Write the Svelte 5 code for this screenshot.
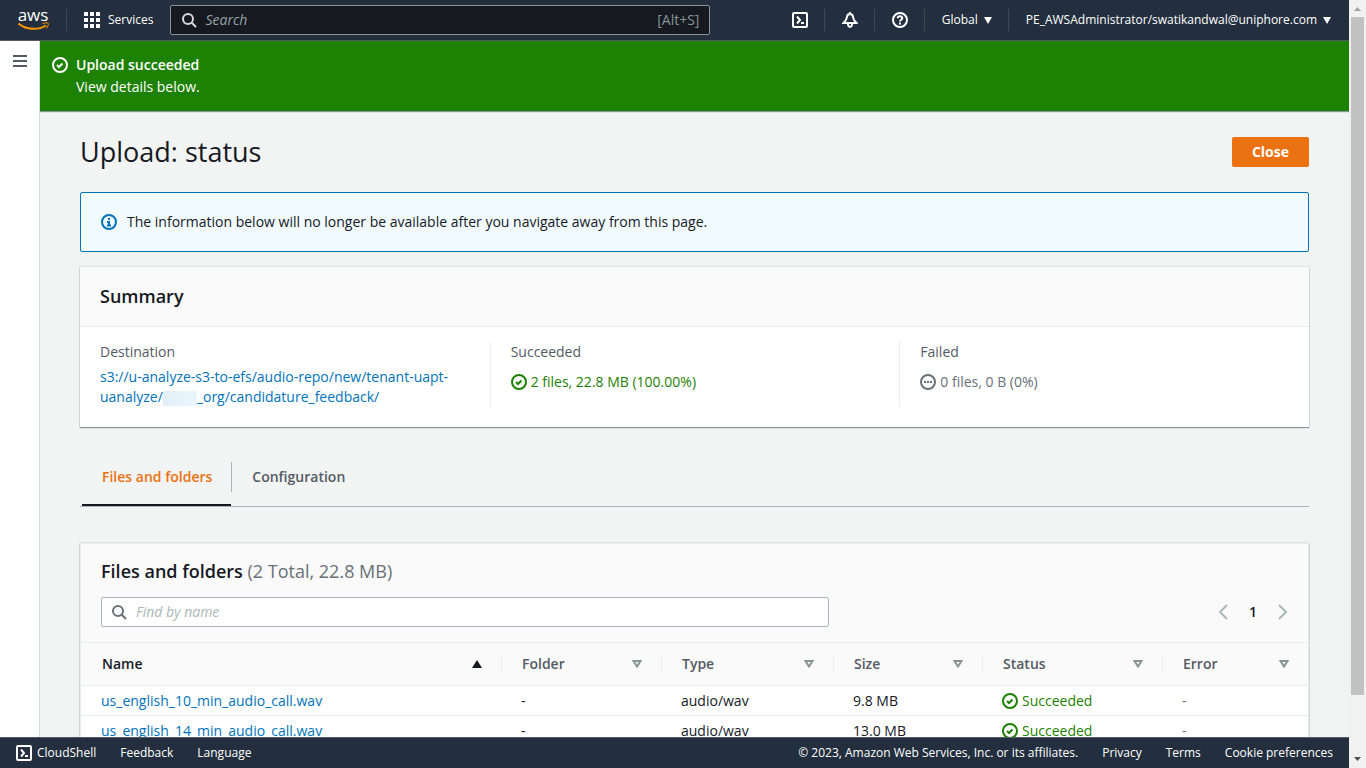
<script>
    let search = "";
    let filter = "";
    let activeTab = "files";

    const tabs = [
        { id: "files", label: "Files and folders" },
        { id: "config", label: "Configuration" },
    ];

    const columns = [
        { id: "name", label: "Name" },
        { id: "folder", label: "Folder" },
        { id: "type", label: "Type" },
        { id: "size", label: "Size" },
        { id: "status", label: "Status" },
        { id: "error", label: "Error" },
    ];

    const files = [
        { name: "us_english_10_min_audio_call.wav", folder: "-", type: "audio/wav", size: "9.8 MB", error: "-" },
        { name: "us_english_14_min_audio_call.wav", folder: "-", type: "audio/wav", size: "13.0 MB", error: "-" },
    ];

    let sortedBy = "name";
    $: rows = files.filter((f) => f.name.includes(filter));
</script>

{#snippet check()}
    <svg class="icon" viewBox="0 0 16 16" aria-hidden="true">
        <circle cx="8" cy="8" r="7" />
        <path d="M5 8l2 2 3.5-3.5" />
    </svg>
{/snippet}

{#snippet shell()}
    <svg class="icon" viewBox="0 0 16 16" aria-hidden="true">
        <rect x="1" y="1" width="14" height="14" rx="1" />
        <path d="M5 4.500L8 8l-3 3.500M9 11h3" />
    </svg>
{/snippet}

{#snippet caret()}
    <svg class="caret" viewBox="0 0 8 7" aria-hidden="true"><path d="M0 0h8L4 7z" /></svg>
{/snippet}

<div class="window">
    <div class="page">
        <header class="topbar">
            <a class="logo" href="#home" aria-label="AWS home">
                <svg viewBox="0 0 32 24" aria-hidden="true">
                    <text x="15" y="13" text-anchor="middle">aws</text>
                    <path class="smile" d="M.5 15.500C8 22 20 22.500 28 17.500" />
                    <path class="tip" d="M24.500 15.800c2-1.200 5.200-1.200 5.700-.5s-.3 3.700-2 5.200" />
                </svg>
            </a>
            <span class="rule"></span>
            <button class="services">
                <svg viewBox="0 0 16 16" aria-hidden="true">
                    <path d="M0 0h4v4H0zM6 0h4v4H6zM12 0h4v4h-4zM0 6h4v4H0zM6 6h4v4H6zM12 6h4v4h-4zM0 12h4v4H0zM6 12h4v4H6zM12 12h4v4h-4z" />
                </svg>
                Services
            </button>
            <label class="search">
                <svg class="icon" viewBox="0 0 16 16" aria-hidden="true">
                    <circle cx="7" cy="7" r="5" /><path d="M10.500 10.500L15 15" />
                </svg>
                <input type="search" placeholder="Search" aria-label="Search" bind:value={search}>
                <span>[Alt+S]</span>
            </label>
            <nav class="tools" aria-label="Account">
                <button aria-label="CloudShell">{@render shell()}</button>
                <button aria-label="Notifications">
                    <svg class="icon" viewBox="0 0 16 16" aria-hidden="true">
                        <path d="M8 2C5.800 2 5 3.500 4.800 5.500 4.500 8.300 3.500 8.800 1.500 11h13C12.500 8.800 11.500 8.300 11.200 5.500 11 3.500 10.200 2 8 2z" />
                        <path d="M6 11.500c-.5 4.500 4.500 4.500 4 0M8 0v2" />
                    </svg>
                </button>
                <button aria-label="Help">
                    <svg class="icon" viewBox="0 0 16 16" aria-hidden="true">
                        <circle cx="8" cy="8" r="7" />
                        <path d="M5.700 6.300C5.700 3.500 10.300 3.500 10.300 6.200 10.300 7.800 8 7.700 8 9.500M8 10.500v2" />
                    </svg>
                </button>
                <button class="menu">Global {@render caret()}</button>
                <button class="menu account">PE_AWSAdministrator/swatikandwal@uniphore.com {@render caret()}</button>
            </nav>
        </header>

        <div class="middle">
            <aside>
                <button aria-label="Open navigation">
                    <svg viewBox="0 0 14 12" aria-hidden="true"><path d="M0 1h14M0 6h14M0 11h14" /></svg>
                </button>
            </aside>

            <main>
                <div class="flash" role="status">
                    {@render check()}
                    <div>
                        <strong>Upload succeeded</strong>
                        <p>View details below.</p>
                    </div>
                </div>

                <div class="content">
                    <div class="title">
                        <h1>Upload: status</h1>
                        <button class="close">Close</button>
                    </div>

                    <div class="info">
                        <svg class="icon" viewBox="0 0 16 16" aria-hidden="true">
                            <circle cx="8" cy="8" r="7" />
                            <path d="M6 8h2v3M6 11.500h4M7 5h2" />
                        </svg>
                        <p>The information below will no longer be available after you navigate away from this page.</p>
                    </div>

                    <section class="card summary">
                        <h2>Summary</h2>
                        <dl>
                            <div>
                                <dt>Destination</dt>
                                <dd>
                                    <a href="#destination">s3://u-analyze-s3-to-efs/audio-repo/new/tenant-uapt-<br>uanalyze/<span class="redacted"></span>_org/candidature_feedback/</a>
                                </dd>
                            </div>
                            <div>
                                <dt>Succeeded</dt>
                                <dd class="result ok">{@render check()} 2 files, 22.8 MB (100.00%)</dd>
                            </div>
                            <div>
                                <dt>Failed</dt>
                                <dd class="result">
                                    <svg class="icon" viewBox="0 0 16 16" aria-hidden="true">
                                        <circle cx="8" cy="8" r="7" />
                                        <path d="M4 8h2M7 8h2M10 8h2" />
                                    </svg>
                                    0 files, 0 B (0%)
                                </dd>
                            </div>
                        </dl>
                    </section>

                    <div class="tabs" role="tablist">
                        {#each tabs as tab}
                            <button role="tab" aria-selected={activeTab === tab.id} class:active={activeTab === tab.id} on:click={() => (activeTab = tab.id)}>
                                <span>{tab.label}</span>
                            </button>
                        {/each}
                    </div>

                    <section class="card files">
                        <div class="files-head">
                            <h2>Files and folders <span>(2 Total, 22.8 MB)</span></h2>
                            <div class="filter-row">
                                <label class="filter">
                                    <svg class="icon" viewBox="0 0 16 16" aria-hidden="true">
                                        <circle cx="7" cy="7" r="5" /><path d="M10.500 10.500L15 15" />
                                    </svg>
                                    <input type="search" placeholder="Find by name" aria-label="Find by name" bind:value={filter}>
                                </label>
                                <div class="pages">
                                    <button aria-label="Previous page"><svg class="icon" viewBox="0 0 16 16" aria-hidden="true"><path d="M12 1L5 8l7 7" /></svg></button>
                                    <button class="current">1</button>
                                    <button aria-label="Next page"><svg class="icon" viewBox="0 0 16 16" aria-hidden="true"><path d="M4 1l7 7-7 7" /></svg></button>
                                </div>
                            </div>
                        </div>
                        <table>
                            <thead>
                                <tr>
                                    {#each columns as column}
                                        <th class={column.id}>
                                            <button class:sorted={sortedBy === column.id} on:click={() => (sortedBy = column.id)}>
                                                {column.label}
                                                <svg viewBox="0 0 10 8" aria-hidden="true">
                                                    {#if sortedBy === column.id}
                                                        <path class="solid" d="M5 0l5 8H0z" />
                                                    {:else}
                                                        <path d="M1.500 1h7L5 6.500z" />
                                                    {/if}
                                                </svg>
                                            </button>
                                        </th>
                                    {/each}
                                </tr>
                            </thead>
                            <tbody>
                                {#each rows as file}
                                    <tr>
                                        <td><a href="#file">{file.name}</a></td>
                                        <td>{file.folder}</td>
                                        <td>{file.type}</td>
                                        <td>{file.size}</td>
                                        <td><span class="result ok">{@render check()} Succeeded</span></td>
                                        <td class="muted">{file.error}</td>
                                    </tr>
                                {/each}
                            </tbody>
                        </table>
                    </section>
                </div>
            </main>
        </div>

        <footer>
            <button>{@render shell()} CloudShell</button>
            <a href="#feedback">Feedback</a>
            <a href="#language">Language</a>
            <span class="legal">© 2023, Amazon Web Services, Inc. or its affiliates.</span>
            <a href="#privacy">Privacy</a>
            <a href="#terms">Terms</a>
            <a href="#cookies">Cookie preferences</a>
        </footer>
    </div>

    <div class="scrollbar" aria-hidden="true">
        <svg viewBox="0 0 17 17"><path fill="#a3a3a3" d="M5 11h7L8.500 7z" /></svg>
        <div class="thumb"></div>
        <div class="track"></div>
        <svg viewBox="0 0 17 17"><path fill="#505050" d="M5 6h7l-3.500 4z" /></svg>
    </div>
</div>

<style>
    :global(body) {
        margin: 0;
        background: #f2f3f3;
    }
    .window {
        display: flex;
        height: 100vh;
        overflow: hidden;
        font-family: "Open Sans", "Noto Sans", sans-serif;
        font-size: 14px;
        line-height: 20px;
        color: #16191f;
    }
    .window :global(*) {
        box-sizing: border-box;
    }
    .page {
        flex: 1;
        min-width: 0;
        display: flex;
        flex-direction: column;
    }
    button, input {
        font: inherit;
        color: inherit;
        background: none;
        border: 0;
        padding: 0;
        margin: 0;
    }
    button {
        cursor: pointer;
    }
    input {
        outline: 0;
    }
    h1, h2, p, dl, dd {
        margin: 0;
    }
    a {
        color: #0073bb;
        text-decoration: none;
    }
    .icon {
        width: 16px;
        height: 16px;
        flex: none;
        fill: none;
        stroke: currentColor;
        stroke-width: 2;
    }

    /* top bar */
    .topbar {
        display: flex;
        align-items: center;
        height: 41px;
        flex: none;
        background: #232f3e;
        border-bottom: 1px solid #545b64;
        color: #fff;
        font-size: 12px;
        font-weight: 500;
    }
    .logo {
        margin-left: 18px;
        height: 24px;
    }
    .logo svg {
        width: 32px;
        height: 24px;
        overflow: visible;
    }
    .logo text {
        fill: #fff;
        font-size: 17px;
        font-weight: 500;
    }
    .logo path {
        fill: none;
        stroke: #f90;
        stroke-width: 2;
    }
    .logo .tip {
        stroke-width: 1;
    }
    .rule {
        height: 22px;
        border-left: 1px solid #414750;
        margin: 0 17px 0 16px;
    }
    .services {
        display: flex;
        align-items: center;
        gap: 8px;
    }
    .services svg {
        width: 16px;
        height: 16px;
        fill: #fff;
    }
    .search {
        display: flex;
        align-items: center;
        width: 540px;
        height: 30px;
        margin-left: 17px;
        padding: 0 10px;
        gap: 8px;
        background: #16191f;
        border: 1px solid #879596;
        border-radius: 2px;
        font-size: 14px;
        font-weight: 400;
    }
    .search .icon {
        color: #d5dbdb;
    }
    .search input {
        flex: 1;
        min-width: 0;
    }
    .search input::placeholder {
        color: #95a5a6;
        font-style: italic;
    }
    .search span {
        color: #879596;
    }
    .tools {
        display: flex;
        align-items: center;
        margin-left: auto;
    }
    .tools button {
        display: flex;
        align-items: center;
        height: 22px;
        padding: 0 16px 0 17px;
        border-left: 1px solid #414750;
        white-space: nowrap;
    }
    .tools button:first-child {
        border-left: 0;
    }
    .menu {
        gap: 6px;
    }
    .account {
        margin-right: 2px;
    }
    .caret {
        width: 8px;
        height: 7px;
        fill: #fff;
    }

    .middle {
        flex: 1;
        min-height: 0;
        display: flex;
    }
    aside {
        width: 40px;
        flex: none;
        background: #fff;
        border-right: 1px solid #d5dbdb;
        padding: 14px 0 0 13px;
    }
    aside button {
        display: block;
    }
    aside svg {
        display: block;
        width: 14px;
        height: 12px;
        stroke: #545b64;
        stroke-width: 2;
    }
    main {
        flex: 1;
        min-width: 0;
        overflow: hidden;
        background: #f2f3f3;
    }
    .flash {
        display: flex;
        gap: 8px;
        padding: 14px 12px;
        background: #1d8102;
        color: #fff;
        box-shadow: 0 1px 1px #879596;
    }
    .flash .icon {
        margin-top: 2px;
    }
    .flash strong, .flash p {
        display: block;
        line-height: 20px;
    }
    .flash strong {
        font-weight: 600;
    }
    .flash p {
        margin-top: 2px;
    }
    .content {
        padding: 26px 40px 0;
    }
    .title {
        display: flex;
        align-items: center;
        justify-content: space-between;
        height: 30px;
        margin-bottom: 25px;
    }
    h1 {
        font-size: 27px;
        font-weight: 400;
        line-height: 30px;
    }
    .close {
        height: 30px;
        padding: 0 20px;
        background: #ec7211;
        border-radius: 2px;
        color: #fff;
        font-weight: 700;
    }
    .info {
        display: flex;
        align-items: center;
        gap: 10px;
        height: 60px;
        padding: 0 20px;
        background: #f1faff;
        border: 1px solid #0073bb;
        border-radius: 2px;
    }
    .info .icon {
        color: #0073bb;
    }

    .card {
        background: #fff;
        box-shadow: 0 1px 1px #879596, 0 0 1px #879596;
    }
    h2 {
        font-size: 18px;
        font-weight: 600;
        line-height: 22px;
    }
    .summary {
        margin-top: 15px;
    }
    .summary h2 {
        padding: 18px 20px 19px;
        background: #fafafa;
        border-bottom: 1px solid #eaeded;
    }
    dl {
        display: grid;
        grid-template-columns: repeat(3, 1fr);
        padding: 15px 0 20px;
    }
    dl > div {
        min-height: 65px;
        padding: 0 20px;
    }
    dl > div + div {
        border-left: 1px solid #eaeded;
    }
    dt {
        color: #545b64;
        margin-bottom: 5px;
    }
    .result {
        display: flex;
        align-items: center;
        gap: 4px;
        color: #687078;
    }
    dd.result {
        margin-top: 10px;
    }
    .ok {
        color: #1d8102;
    }
    .redacted {
        display: inline-block;
        width: 34px;
        height: 15px;
        vertical-align: middle;
        background: linear-gradient(90deg, #e2eff7, #eaf6fe);
    }

    .tabs {
        display: flex;
        margin-top: 20px;
        padding-left: 2px;
        height: 60px;
        border-bottom: 1px solid #aab7b8;
    }
    .tabs button {
        padding: 15px 0 12px;
        border-bottom: 2px solid transparent;
        color: #545b64;
        font-weight: 600;
    }
    .tabs span {
        display: block;
        padding: 5px 19px 5px 20px;
    }
    .tabs button + button span {
        border-left: 1px solid #aab7b8;
    }
    .tabs .active {
        color: #ec7211;
        border-color: #16191f;
    }

    .files {
        margin-top: 36px;
        border: 1px solid #eaeded;
        border-bottom: 0;
    }
    .files-head {
        padding: 16px 20px 15px;
        background: #fafafa;
    }
    .files-head h2 span {
        font-weight: 400;
        color: #687078;
    }
    .filter-row {
        display: flex;
        align-items: center;
        justify-content: space-between;
        margin-top: 15px;
    }
    .filter {
        display: flex;
        align-items: center;
        gap: 9px;
        width: 728px;
        height: 30px;
        padding: 0 9px;
        background: #fff;
        border: 1px solid #aab7b8;
        border-radius: 2px;
    }
    .filter .icon {
        color: #687078;
    }
    .filter input {
        flex: 1;
        min-width: 0;
    }
    .filter input::placeholder {
        color: #aab7b8;
        font-style: italic;
    }
    .pages {
        display: flex;
        align-items: center;
        gap: 18px;
        margin-right: -3px;
        color: #aab7b8;
    }
    .pages button {
        display: flex;
    }
    .pages .current {
        color: #16191f;
        font-weight: 600;
    }

    table {
        width: 100%;
        table-layout: fixed;
        border-collapse: separate;
        border-spacing: 0;
    }
    th {
        height: 44px;
        padding: 0;
        background: #fafafa;
        border: solid #eaeded;
        border-width: 1px 0;
        font-weight: 600;
    }
    th button {
        display: flex;
        align-items: center;
        justify-content: space-between;
        width: 100%;
        height: 20px;
        padding: 0 19px 0 20px;
        border-left: 1px solid #eaeded;
        color: #545b64;
    }
    th:first-child button {
        border-color: transparent;
    }
    th .sorted {
        color: #16191f;
    }
    th svg {
        width: 10px;
        height: 8px;
        fill: none;
        stroke: #879596;
        stroke-width: 2;
    }
    th .solid {
        fill: #16191f;
        stroke: none;
    }
    .folder {
        width: 160px;
    }
    .type {
        width: 172px;
    }
    .size {
        width: 149px;
    }
    .status {
        width: 180px;
    }
    .error {
        width: 146px;
    }
    td {
        height: 30px;
        padding: 0 20px;
        border-bottom: 1px solid #eaeded;
    }
    .muted {
        color: #687078;
    }

    footer {
        display: flex;
        align-items: center;
        flex: none;
        gap: 24px;
        height: 31px;
        padding: 0 16px;
        background: #232f3e;
        border-top: 1px solid #545b64;
        color: #fff;
        font-size: 12px;
        font-weight: 500;
    }
    footer button {
        display: flex;
        align-items: center;
        gap: 5px;
    }
    footer a {
        color: #fff;
    }
    .legal {
        margin-left: auto;
    }

    .scrollbar {
        display: flex;
        flex-direction: column;
        width: 17px;
        flex: none;
        background: #f1f1f1;
    }
    .scrollbar svg {
        width: 17px;
        height: 17px;
        flex: none;
    }
    .thumb {
        flex: 12;
        margin: 0 2px;
        background: #c1c1c1;
    }
    .track {
        flex: 1;
    }
</style>
